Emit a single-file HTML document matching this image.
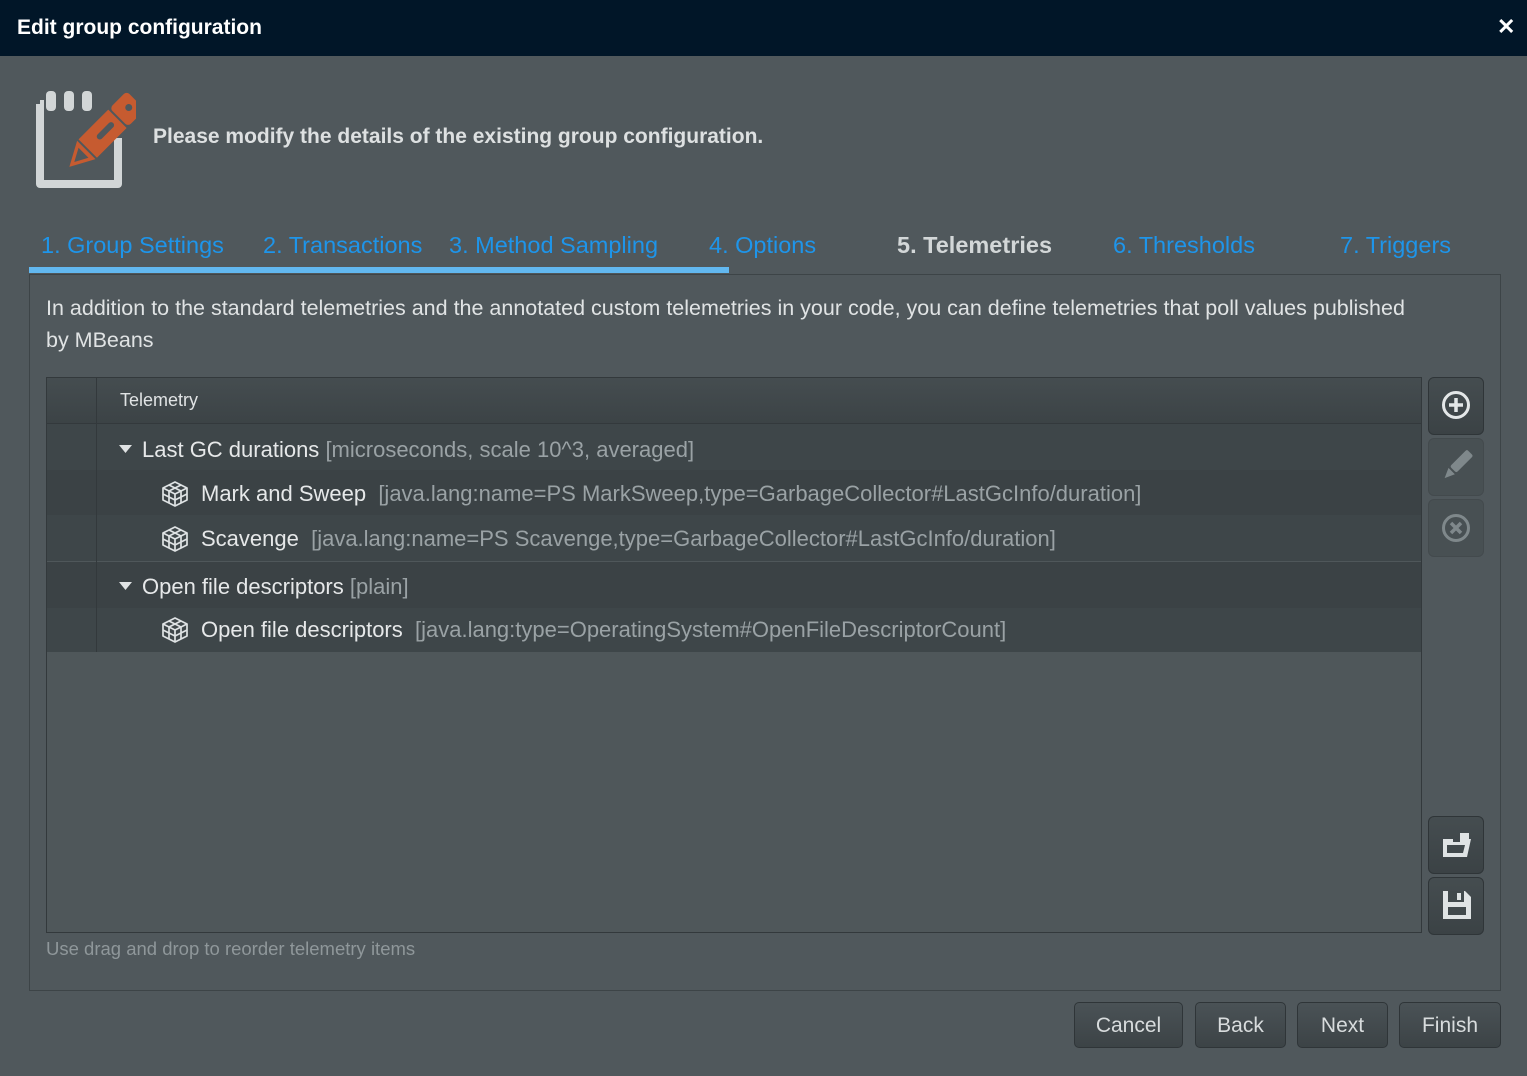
<!DOCTYPE html>
<html><head><meta charset="utf-8">
<style>
*{box-sizing:border-box;margin:0;padding:0}
body{width:1527px;height:1076px;background:#50585c;font-family:"Liberation Sans",sans-serif;position:relative;overflow:hidden;color:#e0e3e4}
.a{position:absolute}
.title{left:0;top:0;width:1527px;height:56px;background:#011628;color:#fff;font-size:21px;font-weight:bold;padding:16px 17px}
.tab{top:232px;font-size:23.5px;color:#1e95ea;white-space:nowrap}
.btn{top:1002px;height:46px;border:1px solid #2f3538;border-radius:5px;background:linear-gradient(#4a5256,#3c4346);color:#d8dcdd;font-size:21px;text-align:center;line-height:46px}
.sb{left:1428px;width:56px;height:58px;border:1px solid #2f3538;border-radius:6px;background:linear-gradient(#454d50,#3b4245)}
.sb.dis{background:#485053;border-color:#434a4d}
.row{left:47px;width:1374px;height:46px}
.t{font-size:22px;white-space:nowrap;color:#e6e8e9}
.g{color:#9aa2a5}
</style></head><body>
<div class="a title">Edit group configuration</div>
<div class="a" style="left:1497px;top:14px;color:#fff;font-size:22px;font-weight:bold">✕</div>

<svg class="a" style="left:34px;top:88px" width="102" height="102" viewBox="0 0 102 102">
<path d="M6 16 V96 H84 V50" fill="none" stroke="#d2d6d7" stroke-width="8" stroke-linejoin="round"/>
<path d="M6 16 H10" stroke="#d2d6d7" stroke-width="8"/>
<rect x="12" y="3" width="10" height="20" rx="4" fill="#d2d6d7"/>
<rect x="30" y="3" width="10" height="20" rx="4" fill="#d2d6d7"/>
<rect x="48" y="3" width="10" height="20" rx="4" fill="#d2d6d7"/>
<g transform="rotate(45 70 40)">
<rect x="60" y="-2" width="26" height="24" rx="4" fill="#c65b30"/>
<circle cx="73" cy="8" r="3.5" fill="#50585c"/>
<rect x="60" y="24" width="26" height="42" fill="#c65b30"/>
<rect x="70" y="30" width="6" height="22" rx="3" fill="#50585c"/>
<path d="M60 68 H86 L73 92 Z" fill="#c65b30"/>
<path d="M66 72 H80 L73 85 Z" fill="#50585c"/>
</g>
</svg>
<div class="a" style="left:153px;top:125px;font-size:21px;font-weight:bold;color:#dde0e1">Please modify the details of the existing group configuration.</div>

<div class="a tab" style="left:41px">1. Group Settings</div>
<div class="a tab" style="left:263px">2. Transactions</div>
<div class="a tab" style="left:449px;width:212px;overflow:hidden">3. Method Sampling</div>
<div class="a tab" style="left:709px">4. Options</div>
<div class="a tab" style="left:897px;color:#d3d7d8;font-weight:bold">5. Telemetries</div>
<div class="a tab" style="left:1113px">6. Thresholds</div>
<div class="a tab" style="left:1340px">7. Triggers</div>
<div class="a" style="left:29px;top:267px;width:700px;height:6px;background:#62b8f0"></div>

<div class="a" style="left:29px;top:274px;width:1472px;height:717px;border:1px solid #3d4447"></div>
<div class="a" style="left:46px;top:292px;font-size:21.5px;line-height:32px;color:#e0e3e4;width:1375px">In addition to the standard telemetries and the annotated custom telemetries in your code, you can define telemetries that poll values published by MBeans</div>

<div class="a" style="left:46px;top:377px;width:1376px;height:556px;border:1px solid #33393c;background:#4f575a"></div>
<div class="a" style="left:47px;top:378px;width:1374px;height:46px;background:linear-gradient(#454d50,#3c4346);border-bottom:1px solid #33393c"></div>
<div class="a" style="left:120px;top:390px;font-size:18px;color:#e0e3e4">Telemetry</div>
<div class="a row" style="top:424px;background:#3e4649"></div>
<div class="a row" style="top:470px;background:#3b4245"></div>
<div class="a row" style="top:515px;background:#3e4649"></div>
<div class="a row" style="top:562px;background:#3b4245"></div>
<div class="a row" style="top:608px;height:44px;background:#3e4649"></div>
<div class="a" style="left:96px;top:378px;width:1px;height:274px;background:#33393c"></div>

<svg class="a" style="left:119px;top:444px" width="14" height="10"><path d="M0 1H13L6.5 9Z" fill="#e0e3e4"/></svg>
<div class="a t" style="left:142px;top:437px">Last GC durations <span class="g">[microseconds, scale 10^3, averaged]</span></div>
<svg class="a" style="left:119px;top:581px" width="14" height="10"><path d="M0 1H13L6.5 9Z" fill="#e0e3e4"/></svg>
<div class="a t" style="left:142px;top:574px">Open file descriptors <span class="g">[plain]</span></div>

<svg width="0" height="0" style="position:absolute"><defs><g id="cube" fill="none" stroke="#dfe3e4" stroke-width="1.7" stroke-linejoin="round"><path d="M14 2 L26 8 V20 L14 26 L2 20 V8 Z"/><path d="M2 8 L14 14 L26 8 M14 14 V26"/><path d="M8 5 L20 11 M20 5 L8 11 M2 14 L14 20 L26 14 M8 11 V23 M20 11 V23"/></g></defs></svg>
<svg class="a" style="left:161px;top:480px" width="28" height="28"><use href="#cube"/></svg>
<svg class="a" style="left:161px;top:525px" width="28" height="28"><use href="#cube"/></svg>
<svg class="a" style="left:161px;top:616px" width="28" height="28"><use href="#cube"/></svg>
<div class="a t" style="left:201px;top:481px">Mark and Sweep &nbsp;<span class="g">[java.lang:name=PS MarkSweep,type=GarbageCollector#LastGcInfo/duration]</span></div>
<div class="a t" style="left:201px;top:526px">Scavenge &nbsp;<span class="g">[java.lang:name=PS Scavenge,type=GarbageCollector#LastGcInfo/duration]</span></div>
<div class="a t" style="left:201px;top:617px">Open file descriptors &nbsp;<span class="g">[java.lang:type=OperatingSystem#OpenFileDescriptorCount]</span></div>

<div class="a" style="left:46px;top:938px;font-size:18.5px;color:#8f979a">Use drag and drop to reorder telemetry items</div>

<div class="a sb" style="top:377px"><svg class="a" style="left:12px;top:12px" width="30" height="30"><circle cx="15" cy="15" r="12.5" fill="none" stroke="#e4e7e8" stroke-width="3"/><path d="M15 8V22M8 15H22" stroke="#e4e7e8" stroke-width="3.5"/></svg></div>
<div class="a sb dis" style="top:438px"><svg class="a" style="left:12px;top:10px" width="32" height="32"><g transform="rotate(45 16 16)"><rect x="12" y="-2" width="9" height="24" rx="2" fill="#7f888b"/><path d="M12 24H21L16.5 34Z" fill="#7f888b"/></g></svg></div>
<div class="a sb dis" style="top:499px"><svg class="a" style="left:12px;top:13px" width="30" height="30"><circle cx="15" cy="15" r="12.5" fill="none" stroke="#7f888b" stroke-width="3"/><path d="M10 10L20 20M20 10L10 20" stroke="#7f888b" stroke-width="3.5"/></svg></div>
<div class="a sb" style="top:816px"><svg class="a" style="left:12px;top:14px" width="32" height="30"><path d="M2 8H12V11H19V2H28V8H30L26 26H2Z" fill="#dfe3e4"/><path d="M6 14H24L22 22H6Z" fill="#41494c"/></svg></div>
<div class="a sb" style="top:877px"><svg class="a" style="left:13px;top:12px" width="30" height="30"><path d="M1 1H23L29 7V29H1Z" fill="#dfe3e4"/><rect x="6" y="1" width="16" height="11" fill="#41494c"/><rect x="15" y="3" width="4" height="7" fill="#dfe3e4"/><rect x="6" y="17" width="18" height="8" fill="#41494c"/></svg></div>

<div class="a btn" style="left:1074px;width:109px">Cancel</div>
<div class="a btn" style="left:1195px;width:91px">Back</div>
<div class="a btn" style="left:1297px;width:91px">Next</div>
<div class="a btn" style="left:1399px;width:102px">Finish</div>
</body></html>
